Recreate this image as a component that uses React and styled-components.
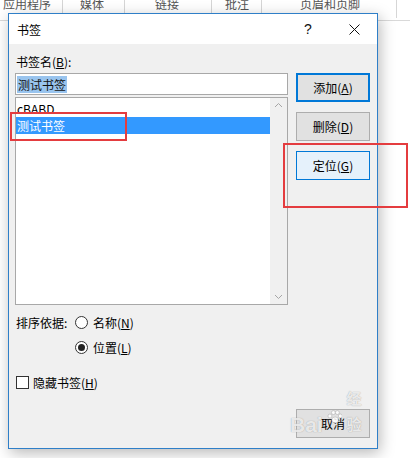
import React from "react";
import styled, { createGlobalStyle } from "styled-components";

const Global = createGlobalStyle`
  html, body { margin: 0; padding: 0; background: #fff; }
  body { font-family: "Noto Sans CJK SC", "Microsoft YaHei", sans-serif; font-size: 12px; color: #000; }
  * { box-sizing: border-box; }
`;

const Page = styled.div`
  position: relative;
  width: 410px;
  height: 458px;
  overflow: hidden;
  background: #fff;
`;

const TabStrip = styled.div`
  display: flex;
  height: 21px;
  border-bottom: 1px solid #d9d9d9;
`;

const TabCell = styled.div`
  width: ${p => p.$w}px;
  flex: ${p => (p.$w ? "none" : "1")};
  height: 18px;
  padding-left: ${p => p.$pl}px;
  border-right: ${p => (p.$w ? "1px solid #d6d6d6" : "none")};
  color: #555;
  font-size: 12px;
  line-height: 14px;
  overflow: hidden;
  white-space: nowrap;
  span { display: block; margin-top: -3px; }
`;

const Dialog = styled.div`
  position: absolute;
  left: 8px;
  top: 13px;
  width: 370px;
  height: 436px;
  border: 1px solid #2f7fc8;
  background: #f0f0f0;
  display: flex;
  flex-direction: column;
  box-shadow: 2px 4px 14px rgba(0, 0, 0, 0.28);
`;

const TitleBar = styled.div`
  height: 30px;
  background: #fff;
  display: flex;
  align-items: center;
  flex: none;
`;

const Title = styled.div`
  flex: 1;
  padding-left: 8px;
  font-size: 12px;
`;

const TitleButton = styled.div`
  width: 46px;
  height: 30px;
  display: flex;
  align-items: center;
  justify-content: center;
  font-family: "Liberation Sans", sans-serif;
  font-size: 14px;
  color: #111;
`;

const Body = styled.div`
  flex: 1;
  display: flex;
  gap: 8px;
  padding: 10px 7px 10px 6px;
`;

const LeftCol = styled.div`
  width: 273px;
  display: flex;
  flex-direction: column;
`;

const Label = styled.div`
  line-height: 16px;
  height: 16px;
  padding-left: 1px;
`;

const U = styled.span`
  text-decoration: underline;
  text-underline-offset: 1px;
`;

const TextInput = styled.div`
  margin-top: 3px;
  height: 22px;
  border: 1px solid #a8a8a8;
  background: #fff;
  display: flex;
  align-items: center;
  padding-left: 1px;
`;

const Selected = styled.span`
  background: #99c4ee;
  color: #111;
  line-height: 17px;
  padding: 0 1px;
`;

const ListBox = styled.div`
  margin-top: 2px;
  height: 208px;
  border: 1px solid #a8a8a8;
  background: #fff;
  display: flex;
`;

const ListItems = styled.div`
  flex: 1;
  padding-top: 2px;
`;

const ListRow = styled.div`
  height: 17px;
  line-height: 17px;
  padding-left: 1px;
  background: ${p => (p.$sel ? "#3399ff" : "transparent")};
  color: ${p => (p.$sel ? "#fff" : "#000")};
`;

const ScrollBar = styled.div`
  width: 17px;
  background: #f0f0f0;
  display: flex;
  flex-direction: column;
  justify-content: space-between;
  align-items: center;
  padding: 4px 0;
`;

const SortGrid = styled.div`
  margin-top: 9px;
  display: grid;
  grid-template-columns: 60px auto;
  row-gap: 8px;
  align-items: center;
`;

const SortLabel = styled.div`
  line-height: 17px;
  padding-left: 1px;
  grid-row: 1;
`;

const Choice = styled.div`
  grid-column: 2;
  display: flex;
  align-items: center;
  gap: 5px;
  height: 17px;
`;

const RadioCircle = styled.span`
  width: 13px;
  height: 13px;
  border-radius: 50%;
  border: 1px solid #333;
  background: #fff;
  display: flex;
  align-items: center;
  justify-content: center;
  &::after {
    content: "";
    width: 7px;
    height: 7px;
    border-radius: 50%;
    background: ${p => (p.$on ? "#222" : "transparent")};
  }
`;

const CheckRow = styled.div`
  margin-top: 18px;
  display: flex;
  align-items: center;
  gap: 4px;
  height: 17px;
  padding-left: 1px;
`;

const CheckBox = styled.span`
  width: 13px;
  height: 13px;
  border: 1px solid #333;
  background: #fff;
`;

const RightCol = styled.div`
  width: 74px;
  display: flex;
  flex-direction: column;
  gap: 10px;
  padding-top: 19px;
`;

const Button = styled.div`
  height: 29px;
  display: flex;
  align-items: center;
  justify-content: center;
  background: ${p => (p.$hover ? "#e5f1fb" : "#e1e1e1")};
  border: ${p => (p.$def ? "2px solid #0078d7" : p.$hover ? "1px solid #0078d7" : "1px solid #adadad")};
  margin-top: ${p => (p.$bottom ? "auto" : "0")};
  font-size: 12px;
`;

const RedBox = styled.div`
  position: absolute;
  left: ${p => p.$x}px;
  top: ${p => p.$y}px;
  width: ${p => p.$w}px;
  height: ${p => p.$h}px;
  border: 2px solid #e43c3f;
  pointer-events: none;
`;

const Watermark = styled.div`
  position: absolute;
  left: 290px;
  top: 398px;
  width: 86px;
  height: 40px;
  display: flex;
  align-items: flex-end;
  gap: 4px;
  pointer-events: none;
  color: rgba(255, 255, 255, 0.8);
  text-shadow: 0 0 1px rgba(90, 90, 90, 0.6);
  font-family: "Liberation Sans", "Noto Sans CJK SC", sans-serif;
  font-weight: bold;
`;

const WmText = styled.span`
  font-size: ${p => p.$size}px;
  line-height: 26px;
`;

const Chevron = ({ up }) => (
  <svg width="9" height="6" viewBox="0 0 9 6">
    <path
      d={up ? "M1 5 L4.5 1.5 L8 5" : "M1 1 L4.5 4.5 L8 1"}
      fill="none"
      stroke="#a6a6a6"
      strokeWidth="1"
    />
  </svg>
);

const CloseIcon = () => (
  <svg width="11" height="11" viewBox="0 0 11 11">
    <path d="M0.5 0.5 L10.5 10.5 M10.5 0.5 L0.5 10.5" stroke="#111" strokeWidth="1" />
  </svg>
);

const Paw = () => (
  <svg width="16" height="14" viewBox="0 0 16 14" style={{ marginBottom: 14 }}>
    <g fill="rgba(255,255,255,0.85)" stroke="rgba(120,120,120,0.5)" strokeWidth="0.6">
      <circle cx="3" cy="6" r="2" />
      <circle cx="6.5" cy="2.5" r="2" />
      <circle cx="10.5" cy="2.5" r="2" />
      <circle cx="13.5" cy="6" r="2" />
      <ellipse cx="8.3" cy="10" rx="3.5" ry="3" />
    </g>
  </svg>
);

const tabs = [
  { t: "应用程序", w: 63, pl: 3 },
  { t: "媒体", w: 62, pl: 17 },
  { t: "链接", w: 87, pl: 30 },
  { t: "批注", w: 50, pl: 13 },
  { t: "页眉和页脚", w: 135, pl: 38 },
  { t: "", w: 0, pl: 0 },
];

export default function App() {
  return (
    <Page>
      <Global />
      <TabStrip>
        {tabs.map((c, i) => (
          <TabCell key={i} $w={c.w} $pl={c.pl}>
            <span>{c.t}</span>
          </TabCell>
        ))}
      </TabStrip>

      <Dialog>
        <TitleBar>
          <Title>书签</Title>
          <TitleButton>?</TitleButton>
          <TitleButton>
            <CloseIcon />
          </TitleButton>
        </TitleBar>
        <Body>
          <LeftCol>
            <Label>
              书签名(<U>B</U>):
            </Label>
            <TextInput>
              <Selected>测试书签</Selected>
            </TextInput>
            <ListBox>
              <ListItems>
                <ListRow>cBABD</ListRow>
                <ListRow $sel>测试书签</ListRow>
              </ListItems>
              <ScrollBar>
                <Chevron up />
                <Chevron />
              </ScrollBar>
            </ListBox>
            <SortGrid>
              <SortLabel>排序依据:</SortLabel>
              <Choice style={{ gridRow: 1 }}>
                <RadioCircle />
                <span>
                  名称(<U>N</U>)
                </span>
              </Choice>
              <Choice>
                <RadioCircle $on />
                <span>
                  位置(<U>L</U>)
                </span>
              </Choice>
            </SortGrid>
            <CheckRow>
              <CheckBox />
              <span>
                隐藏书签(<U>H</U>)
              </span>
            </CheckRow>
          </LeftCol>
          <RightCol>
            <Button $def>
              添加(<U>A</U>)
            </Button>
            <Button>
              删除(<U>D</U>)
            </Button>
            <Button $hover>
              定位(<U>G</U>)
            </Button>
            <Button $bottom>取消</Button>
          </RightCol>
        </Body>
      </Dialog>

      <RedBox $x={10} $y={112} $w={117} $h={29} />
      <RedBox $x={283} $y={143} $w={125} $h={65} />

      <Watermark>
        <WmText $size={21}>Bai</WmText>
        <Paw />
        <WmText $size={15}>经验</WmText>
      </Watermark>
    </Page>
  );
}
